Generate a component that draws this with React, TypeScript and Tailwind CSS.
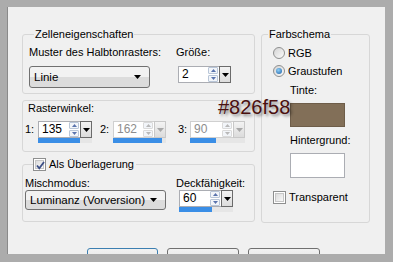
import React from 'react'

// Win7-style "Farbraster" dialog, clipped inside a gray frame

const DownTri = ({ color = '#000' }: { color?: string }) => (
  <svg width="7" height="4" viewBox="0 0 7 4" className="shrink-0">
    <polygon points="0,0 7,0 3.5,4" fill={color} />
  </svg>
)

function SpinArrows({ disabled }: { disabled?: boolean }) {
  const c = disabled ? '#b8b8b8' : '#5a74ad'
  const b = disabled ? 'border-[#dadada]' : 'border-[#b9c6d8]'
  return (
    <div className="flex flex-col w-[10px] h-[15px] gap-[1px] mr-[1px]">
      <div className={`flex-1 flex items-center justify-center border ${b} bg-[#f2f5f9] rounded-[1px]`}>
        <svg width="5" height="3" viewBox="0 0 5 3">
          <polygon points="0,3 5,3 2.5,0" fill={c} />
        </svg>
      </div>
      <div className={`flex-1 flex items-center justify-center border ${b} bg-[#f2f5f9] rounded-[1px]`}>
        <svg width="5" height="3" viewBox="0 0 5 3">
          <polygon points="0,0 5,0 2.5,3" fill={c} />
        </svg>
      </div>
    </div>
  )
}

function Spin({
  value,
  w,
  fill,
  disabled,
  bar = true,
}: {
  value: string
  w: string
  fill?: number
  disabled?: boolean
  bar?: boolean
}) {
  return (
    <div className={`flex flex-col ${w}`}>
      <div className="flex h-[17px]">
        <div
          className={`flex-1 flex items-center bg-white border border-r-0 pl-[3px] ${
            disabled ? 'border-[#d0d0d0]' : 'border-[#abadb3]'
          }`}
        >
          <span className={`flex-1 text-[12px] leading-[15px] ${disabled ? 'text-[#8d8d8d]' : 'text-black'}`}>
            {value}
          </span>
          <SpinArrows disabled={disabled} />
        </div>
        <div
          className={`w-[12px] flex items-center justify-center border bg-gradient-to-b from-[#f3f3f3] to-[#dcdcdc] ${
            disabled ? 'border-[#c8c8c8]' : 'border-[#6b6b6b]'
          }`}
        >
          <DownTri color={disabled ? '#a8a8a8' : '#000'} />
        </div>
      </div>
      {bar && (
        <div className="h-[5px] flex bg-[#e6e6e6]">
          <div className="bg-[#3a8ee6] h-full" style={{ width: fill }} />
        </div>
      )}
    </div>
  )
}

function Select({ label, w, h }: { label: string; w: string; h: string }) {
  return (
    <div
      className={`${w} ${h} flex items-center justify-between rounded-[3px] border border-[#707070] bg-gradient-to-b from-[#f2f2f2] from-50% to-[#dcdcdc] to-50% pl-[4px] pr-[8px]`}
    >
      <span className="text-[11.5px] leading-[14px] whitespace-nowrap">{label}</span>
      <DownTri />
    </div>
  )
}

function CheckBox({ checked }: { checked?: boolean }) {
  return (
    <div className="w-[13px] h-[13px] border border-[#8e8f8f] bg-white p-[1px] shrink-0">
      <div className="w-full h-full bg-gradient-to-br from-[#dcdcdc] to-[#f8f8f8] border border-[#c6c6c6] relative">
        {checked && (
          <svg className="absolute -left-[1px] -top-[1px]" width="11" height="11" viewBox="0 0 11 11">
            <path d="M2 5.5 L4.3 8.3 L9 2" stroke="#3c4f86" strokeWidth="1.8" fill="none" />
          </svg>
        )}
      </div>
    </div>
  )
}

function Radio({ checked }: { checked?: boolean }) {
  return (
    <div className="w-[12px] h-[12px] rounded-full border border-[#8e8f8f] bg-gradient-to-br from-[#d4d4d4] to-[#fbfbfb] flex items-center justify-center shrink-0">
      {checked && (
        <div className="w-[6px] h-[6px] rounded-full bg-[radial-gradient(circle_at_40%_35%,#8fd0f7,#1b5ea6)]" />
      )}
    </div>
  )
}

export default function App() {
  return (
    <div className="relative w-[393px] h-[262px] bg-[#acacac] pt-[7px] pl-[7px] pr-[8px] pb-[8px] font-['Liberation_Sans',Arial,sans-serif] text-[11px] text-black overflow-hidden">
      <div className="w-[378px] h-[247px] bg-[#f0f0f0] border-l border-[#8a8a8a] pl-[14px] pt-[19px] overflow-hidden">
        <div className="flex gap-[6px]">
          {/* left column */}
          <div className="w-[233px] flex flex-col">
            <fieldset className="border border-[#d7d7d7] rounded-[3px] pl-[6px] pb-[5px]">
              <legend className="ml-[5px] px-[1px] leading-[16px]">Zelleneigenschaften</legend>
              <div className="flex mt-[2px]">
                <div className="flex flex-col w-[147px]">
                  <span className="leading-[16px]">Muster des Halbtonrasters:</span>
                  <div className="mt-[6px]">
                    <Select label="Linie" w="w-[121px]" h="h-[22px]" />
                  </div>
                </div>
                <div className="flex flex-col">
                  <span className="leading-[16px]">Größe:</span>
                  <div className="mt-[6px] ml-[2px]">
                    <Spin value="2" w="w-[53px]" bar={false} />
                  </div>
                </div>
              </div>
            </fieldset>

            <div className="mt-[6px] h-[52px] border border-[#d7d7d7] rounded-[3px]">
              <div className="pl-[5px] leading-[15px]">Rasterwinkel:</div>
              <div className="flex items-start mt-[5px] pl-[2px]">
                <span className="w-[13px] leading-[17px]">1:</span>
                <Spin value="135" w="w-[54px]" fill={42} />
                <span className="ml-[8px] w-[13px] leading-[17px]">2:</span>
                <Spin value="162" w="w-[53px]" fill={49} disabled />
                <span className="ml-[12px] w-[12px] leading-[17px]">3:</span>
                <Spin value="90" w="w-[55px]" fill={26} disabled />
              </div>
            </div>

            <fieldset className="mt-[4px] border border-[#d7d7d7] rounded-[3px] pl-[2px] pb-[9px]">
              <legend className="ml-[8px] pr-[2px] h-[16px] flex items-center gap-[3px]">
                <CheckBox checked />
                <span className="leading-[16px]">Als Überlagerung</span>
              </legend>
              <div className="flex mt-[4px]">
                <div className="flex flex-col w-[151px]">
                  <span className="leading-[14px]">Mischmodus:</span>
                  <Select label="Luminanz (Vorversion)" w="w-[141px]" h="h-[20px]" />
                </div>
                <div className="flex flex-col">
                  <span className="leading-[14px]">Deckfähigkeit:</span>
                  <div className="ml-[3px]">
                    <Spin value="60" w="w-[54px]" fill={33} />
                  </div>
                </div>
              </div>
            </fieldset>
          </div>

          {/* right column */}
          <fieldset className="w-[109px] border border-[#d7d7d7] rounded-[3px] pb-[17px]">
            <legend className="ml-[6px] px-[1px] leading-[16px]">Farbschema</legend>
            <div className="flex items-center gap-[3px] pl-[11px] mt-[3px] h-[16px]">
              <Radio />
              <span>RGB</span>
            </div>
            <div className="flex items-center gap-[3px] pl-[11px] mt-[2px] h-[16px]">
              <Radio checked />
              <span>Graustufen</span>
            </div>
            <div className="pl-[28px] mt-[3px] leading-[16px]">Tinte:</div>
            <div className="ml-[28px] mt-[5px] w-[55px] h-[24px] bg-[#826f58] border border-[#6e5d49]" />
            <div className="pl-[28px] mt-[5px] leading-[16px]">Hintergrund:</div>
            <div className="ml-[28px] mt-[5px] w-[55px] h-[25px] bg-white border border-[#abadb3]" />
            <div className="flex items-center gap-[3px] pl-[11px] mt-[11px] h-[16px]">
              <CheckBox />
              <span>Transparent</span>
            </div>
          </fieldset>
        </div>

        {/* dialog buttons, cut off by the frame */}
        <div className="flex gap-[9px] ml-[65px] mt-[25px]">
          <div className="w-[71px] h-[23px] rounded-[3px] border border-[#3c7fb1] bg-gradient-to-b from-[#f2f2f2] to-[#dcdcdc]" />
          <div className="w-[72px] h-[23px] rounded-[3px] border border-[#707070] bg-gradient-to-b from-[#f2f2f2] to-[#dcdcdc]" />
          <div className="w-[72px] h-[23px] rounded-[3px] border border-[#707070] bg-gradient-to-b from-[#f2f2f2] to-[#dcdcdc]" />
        </div>
      </div>

      {/* pasted colour code over the dialog */}
      <div className="absolute left-[218px] top-[96px] text-[20px] leading-[22px] text-[#4a1010] [text-shadow:2px_2px_3px_rgba(0,0,0,0.45)]">
        #826f58
      </div>
    </div>
  )
}
